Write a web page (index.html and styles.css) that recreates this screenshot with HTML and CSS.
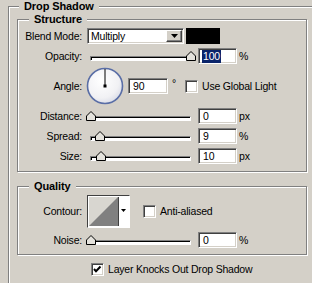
FILE: index.html
```html
<!DOCTYPE html>
<html>
<head>
<meta charset="utf-8">
<link rel="stylesheet" href="styles.css">
</head>
<body>
<fieldset class="grp outer">
  <legend>Drop Shadow</legend>

  <fieldset class="grp sub structure">
    <legend>Structure</legend>

    <div class="row r-blend">
      <span class="lbl">Blend Mode:</span>
      <div class="select">
        <span class="sel-text">Multiply</span>
        <span class="sel-btn"><svg width="7" height="4" viewBox="0 0 7 4"><polygon points="0,0 7,0 3.5,4" fill="#000"/></svg></span>
      </div>
      <div class="swatch"></div>
    </div>

    <div class="row r-opacity">
      <span class="lbl">Opacity:</span>
      <div class="slider"><div class="track"></div><svg class="thumb" style="--v:100" width="10" height="10" viewBox="0 0 10 10"><polygon points="0.5,9.5 0.5,5 5,0.5 9.5,5 9.5,9.5" fill="#e4e2dc" stroke="#000" stroke-width="1"/></svg></div>
      <div class="field"><span class="hl">100</span></div>
      <span class="unit">%</span>
    </div>

    <div class="row r-angle">
      <span class="lbl">Angle:</span>
      <svg class="dial" width="38" height="38" viewBox="0 0 38 38">
        <defs>
          <radialGradient id="dg" cx="0.4" cy="0.35" r="0.7">
            <stop offset="0" stop-color="#ffffff"/>
            <stop offset="0.7" stop-color="#f1f1f4"/>
            <stop offset="1" stop-color="#d8dbe6"/>
          </radialGradient>
        </defs>
        <circle cx="19" cy="19" r="17.5" fill="url(#dg)" stroke="#5a6ea6" stroke-width="1.6"/>
        <line x1="19" y1="19" x2="19" y2="2" stroke="#000" stroke-width="1"/>
        <rect x="17.5" y="17.5" width="3" height="3" fill="#000"/>
      </svg>
      <div class="field wide"><span>90</span></div>
      <span class="deg">°</span>
      <span class="check"></span>
      <span class="clabel">Use Global Light</span>
    </div>

    <div class="row r-dist">
      <span class="lbl">Distance:</span>
      <div class="slider"><div class="track"></div><svg class="thumb" style="--v:0" width="10" height="10" viewBox="0 0 10 10"><polygon points="0.5,9.5 0.5,5 5,0.5 9.5,5 9.5,9.5" fill="#e4e2dc" stroke="#000" stroke-width="1"/></svg></div>
      <div class="field"><span>0</span></div>
      <span class="unit">px</span>
    </div>

    <div class="row r-spread">
      <span class="lbl">Spread:</span>
      <div class="slider"><div class="track"></div><svg class="thumb" style="--v:9" width="10" height="10" viewBox="0 0 10 10"><polygon points="0.5,9.5 0.5,5 5,0.5 9.5,5 9.5,9.5" fill="#e4e2dc" stroke="#000" stroke-width="1"/></svg></div>
      <div class="field"><span>9</span></div>
      <span class="unit">%</span>
    </div>

    <div class="row r-size">
      <span class="lbl">Size:</span>
      <div class="slider"><div class="track"></div><svg class="thumb" style="--v:10" width="10" height="10" viewBox="0 0 10 10"><polygon points="0.5,9.5 0.5,5 5,0.5 9.5,5 9.5,9.5" fill="#e4e2dc" stroke="#000" stroke-width="1"/></svg></div>
      <div class="field"><span>10</span></div>
      <span class="unit">px</span>
    </div>
  </fieldset>

  <fieldset class="grp sub quality">
    <legend>Quality</legend>

    <div class="row r-contour">
      <span class="lbl">Contour:</span>
      <div class="contour">
        <svg class="curve" width="29" height="29" viewBox="0 0 29 29">
          <rect width="29" height="29" fill="#d8d6d0"/>
          <polygon points="0,29 29,0 29,29" fill="#808080"/>
        </svg>
        <span class="c-btn"><svg width="5" height="3" viewBox="0 0 5 3"><polygon points="0,0 5,0 2.5,3" fill="#000"/></svg></span>
      </div>
      <span class="check"></span>
      <span class="clabel">Anti-aliased</span>
    </div>

    <div class="row r-noise">
      <span class="lbl">Noise:</span>
      <div class="slider"><div class="track"></div><svg class="thumb" style="--v:0" width="10" height="10" viewBox="0 0 10 10"><polygon points="0.5,9.5 0.5,5 5,0.5 9.5,5 9.5,9.5" fill="#e4e2dc" stroke="#000" stroke-width="1"/></svg></div>
      <div class="field"><span>0</span></div>
      <span class="unit">%</span>
    </div>
  </fieldset>

  <div class="row r-knock">
    <span class="check on"><svg width="9" height="9" viewBox="0 0 9 9"><polyline points="1,4 3,6.2 7.5,1.5" fill="none" stroke="#000" stroke-width="2"/></svg></span>
    <span class="clabel">Layer Knocks Out Drop Shadow</span>
  </div>
</fieldset>
</body>
</html>
```

FILE: styles.css
```css
html, body {
  margin: 0;
  padding: 0;
  background: #d4d0c8;
}

body {
  width: 312px;
  height: 283px;
  overflow: hidden;
  font-family: "Liberation Sans", Arial, sans-serif;
  font-size: 10.5px;
  letter-spacing: -0.2px;
  line-height: 13px;
  color: #000;
}

.grp {
  margin: 0;
  padding: 0;
  min-width: 0;
  border: 1px solid #808080;
  box-shadow: 1px 1px 0 #fff, inset 1px 1px 0 #fff;
  box-sizing: border-box;
}

.grp > legend {
  padding: 0 5px;
  font-weight: bold;
  font-size: 11px;
  letter-spacing: -0.1px;
  line-height: 12px;
  background: #d4d0c8;
}

.outer {
  margin-left: 8px;
  width: 304px;
  height: 283px;
  border-right: none;
  border-bottom: none;
  box-shadow: inset 1px 1px 0 #fff;
}

.outer > legend {
  margin-left: 10px;
}

.sub {
  width: 290px;
  margin-left: 8px;
}

.sub > legend {
  margin-left: 11px;
}

.structure {
  margin-top: 1px;
  padding-bottom: 7px;
}

.quality {
  margin-top: 8px;
  padding-bottom: 6px;
}

.row {
  display: flex;
  align-items: center;
  height: 16px;
}

.lbl {
  width: 64px;
  text-align: right;
  flex: none;
}

.r-blend { margin-top: 3px; }
.r-opacity { margin-top: 4px; }
.r-angle { margin-top: 3px; height: 38px; }
.r-dist { margin-top: 3px; }
.r-spread { margin-top: 4px; }
.r-size { margin-top: 4px; }
.r-contour { margin-top: 3px; height: 33px; }
.r-noise { margin-top: 4px; }
.r-knock { margin-top: 8px; height: 13px; margin-left: 82px; }

/* sunken 3D edge shared by fields, select, checkbox */
.select, .field, .check, .contour {
  box-sizing: border-box;
  border: 1px solid;
  border-color: #808080 #fff #fff #808080;
  box-shadow: inset 1px 1px 0 #404040, inset -1px -1px 0 #d4d0c8;
  background: #fff;
  flex: none;
}

.select {
  margin-left: 5px;
  width: 97px;
  height: 16px;
  display: flex;
  align-items: center;
  padding: 1px;
}

.sel-text {
  flex: 1;
  padding-left: 2px;
}

.sel-btn {
  box-sizing: border-box;
  width: 16px;
  height: 12px;
  background: #d4d0c8;
  border: 1px solid;
  border-color: #fff #404040 #404040 #fff;
  box-shadow: inset -1px -1px 0 #808080;
  display: flex;
  align-items: center;
  justify-content: center;
}

.swatch {
  margin-left: 2px;
  width: 34px;
  height: 16px;
  background: #000;
  flex: none;
}

.slider {
  position: relative;
  margin-left: 5px;
  width: 108px;
  height: 16px;
  flex: none;
}

.track {
  position: absolute;
  left: 3px;
  top: 8px;
  width: 101px;
  height: 5px;
  box-sizing: border-box;
  border: 1px solid;
  border-color: #808080 #fff #fff #808080;
  box-shadow: inset 1px 1px 0 #000;
  background: #fff;
}

.thumb {
  position: absolute;
  top: 3px;
  left: calc(var(--v) * 1px - 1px);
}

.field {
  margin-left: 3px;
  width: 39px;
  height: 16px;
  padding-left: 4px;
  display: flex;
  align-items: center;
}

.field.wide {
  margin-left: 4px;
  width: 40px;
}

.hl {
  background: #0a246a;
  color: #fff;
  padding: 0 1px;
  margin-left: -1px;
}

.unit {
  margin-left: 2px;
}

.dial {
  margin-left: 4px;
  flex: none;
}

.deg {
  margin-left: 4px;
  align-self: flex-start;
  margin-top: 10px;
}

.check {
  width: 13px;
  height: 13px;
  display: flex;
  align-items: center;
  justify-content: center;
}

.r-angle .check {
  margin-left: 9px;
}

.clabel {
  margin-left: 4px;
  white-space: nowrap;
}

.contour {
  margin-left: 5px;
  width: 43px;
  height: 33px;
  border-color: #404040 #fff #fff #404040;
  box-shadow: none;
  display: flex;
  align-items: stretch;
  padding: 1px;
}

.curve {
  display: block;
  flex: none;
}

.c-btn {
  flex: 1;
  background: #fff;
  border-left: 1px solid #404040;
  display: flex;
  justify-content: center;
  padding-top: 12px;
}

.c-btn svg {
  display: block;
}

.r-contour .check {
  margin-left: 13px;
}
```
